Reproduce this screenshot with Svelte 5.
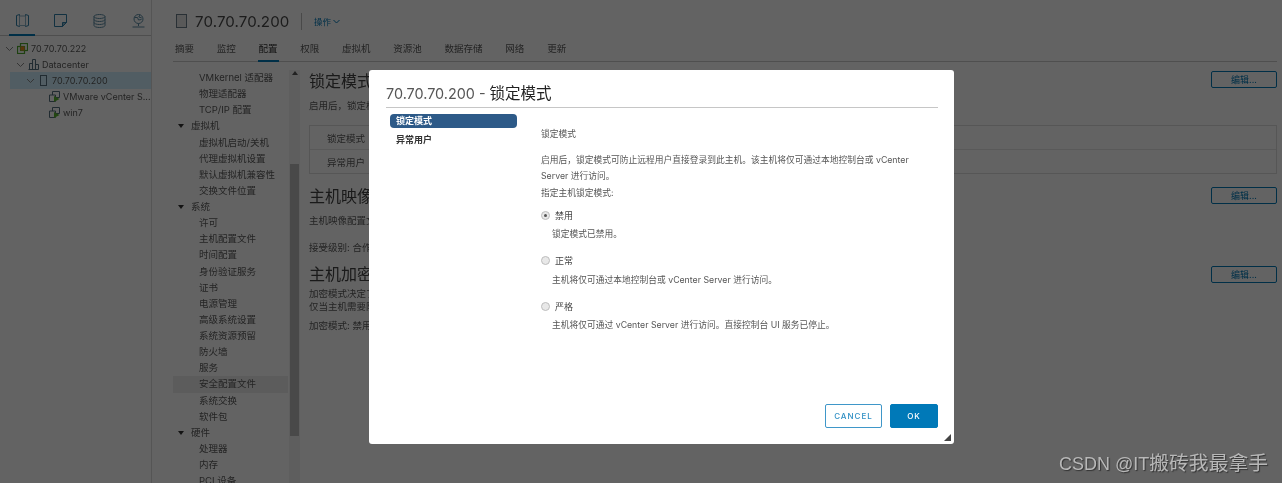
<script>
  const tabs = ['摘要', '监控', '配置', '权限', '虚拟机', '资源池', '数据存储', '网络', '更新'];
  const nav = [
    ['VMkernel 适配器'], ['物理适配器'], ['TCP/IP 配置'],
    ['虚拟机', 'group'], ['虚拟机启动/关机'], ['代理虚拟机设置'], ['默认虚拟机兼容性'], ['交换文件位置'],
    ['系统', 'group'], ['许可'], ['主机配置文件'], ['时间配置'], ['身份验证服务'], ['证书'], ['电源管理'],
    ['高级系统设置'], ['系统资源预留'], ['防火墙'], ['服务'], ['安全配置文件', 'active'], ['系统交换'], ['软件包'],
    ['硬件', 'group'], ['处理器'], ['内存'], ['PCI 设备']
  ];
  const modes = [
    { label: '禁用', desc: '锁定模式已禁用。', checked: true },
    { label: '正常', desc: '主机将仅可通过本地控制台或 vCenter Server 进行访问。', checked: false },
    { label: '严格', desc: '主机将仅可通过 vCenter Server 进行访问。直接控制台 UI 服务已停止。', checked: false }
  ];
</script>

<div class="page">
  <aside class="side">
    <div class="side-icons">
      <span class="si on">
        <svg width="13" height="13" viewBox="0 0 13 13" fill="none" stroke="#2f7fa8" stroke-width="1"><path d="M.5 1.500 3.500.5v12l-3-1zM12.500 1.500l-3-1v12l3-1z"/><rect x="3.500" y="2" width="6" height="9.500" stroke="#8fb4c8"/></svg>
      </span>
      <span class="si">
        <svg width="13" height="13" viewBox="0 0 13 13" fill="none" stroke="#2f7fa8" stroke-width="1"><path d="M.5.5h12v8l-4 4h-8z"/><path d="M8.500 12.500v-4h4z" fill="#8fb4c8"/></svg>
      </span>
      <span class="si">
        <svg width="13" height="14" viewBox="0 0 13 14" fill="none" stroke="#5a8aa3" stroke-width="1"><ellipse cx="6.500" cy="2.500" rx="5.500" ry="2"/><path d="M1 2.500v9c0 1.100 2.500 2 5.500 2s5.500-.9 5.500-2v-9M1 5.500c0 1.100 2.500 2 5.500 2s5.500-.9 5.500-2M1 8.500c0 1.100 2.500 2 5.500 2s5.500-.9 5.500-2"/></svg>
      </span>
      <span class="si">
        <svg width="13" height="14" viewBox="0 0 13 14" fill="none" stroke="#5a8aa3" stroke-width="1"><circle cx="6.500" cy="5" r="4.500"/><path d="M2.500 3.500h3l1 2.500 3-.5M8 .8 6.800 3l3 1M6.500 9.500V12M.5 13h12"/></svg>
      </span>
    </div>
    <div class="tree">
      <div class="node d0">
        <svg class="chev" width="9" height="9" viewBox="0 0 9 9"><path d="M1 3l3.500 3.500L8 3" fill="none" stroke="#8a8a8a" stroke-width="1"/></svg>
        <svg width="11" height="11" viewBox="0 0 11 11"><rect x="3.500" y=".5" width="7" height="7" fill="none" stroke="#4ea72e" stroke-width="1.200"/><rect x=".5" y="3.500" width="7" height="7" fill="none" stroke="#4ea72e" stroke-width="1.200"/><rect x="3.500" y="3.500" width="4" height="4" fill="#e8871e"/></svg>
        <span>70.70.70.222</span>
      </div>
      <div class="node d1">
        <svg class="chev" width="9" height="9" viewBox="0 0 9 9"><path d="M1 3l3.500 3.500L8 3" fill="none" stroke="#8a8a8a" stroke-width="1"/></svg>
        <svg width="11" height="11" viewBox="0 0 11 11" fill="none" stroke="#57707f"><path d="M.5 10.500h10M1.500 10.500v-6h3v6M4.500 10.500V.5h3v10M7.500 5.500h3v5"/></svg>
        <span>Datacenter</span>
      </div>
      <div class="node d2 sel">
        <svg class="chev" width="9" height="9" viewBox="0 0 9 9"><path d="M1 3l3.500 3.500L8 3" fill="none" stroke="#8a8a8a" stroke-width="1"/></svg>
        <svg width="11" height="11" viewBox="0 0 11 11" fill="none" stroke="#57707f"><rect x="2.500" y=".5" width="6" height="10"/></svg>
        <span>70.70.70.200</span>
      </div>
      <div class="node d3">
        <svg width="11" height="11" viewBox="0 0 11 11"><path d="M3.500 4V.5h7v6H7M.5 4h6v6.500h-6z" fill="none" stroke="#57707f"/><path d="M5 5l5.500 3L5 11z" fill="#5cb531"/></svg>
        <span>VMware vCenter S...</span>
      </div>
      <div class="node d3">
        <svg width="11" height="11" viewBox="0 0 11 11"><path d="M3.500 4V.5h7v6H7M.5 4h6v6.500h-6z" fill="none" stroke="#57707f"/><path d="M5 5l5.500 3L5 11z" fill="#5cb531"/></svg>
        <span>win7</span>
      </div>
    </div>
  </aside>

  <main class="main">
    <header class="head">
      <svg width="11" height="14" viewBox="0 0 11 14" fill="#e6e6e6" stroke="#6b7d88"><rect x=".5" y=".5" width="10" height="13"/></svg>
      <h1>70.70.70.200</h1>
      <span class="vline"></span>
      <span class="actions">操作
        <svg width="7" height="7" viewBox="0 0 7 7"><path d="M.5 2l3 3 3-3" fill="none" stroke="#0079b8"/></svg>
      </span>
    </header>
    <nav class="tabs">
      {#each tabs as t}
        <span class="tab" class:cur={t === '配置'}>{t}</span>
      {/each}
    </nav>
    <div class="body">
      <div class="cfg">
        {#each nav as [t, k]}
          <div class="cfg-row {k ?? ''}">
            {#if k === 'group'}<i class="caret"></i>{/if}{t}
          </div>
        {/each}
      </div>
      <div class="track">
        <i class="up"></i>
        <div class="thumb"></div>
        <i class="down"></i>
      </div>
      <div class="detail">
        <div class="sec-head first"><h2>锁定模式</h2><button class="edit">编辑...</button></div>
        <p class="p1">启用后，锁定模式</p>
        <div class="tbl">
          <div class="tr"><span>锁定模式</span></div>
          <div class="tr"><span>异常用户</span></div>
        </div>
        <div class="sec-head second"><h2>主机映像配置文件</h2><button class="edit">编辑...</button></div>
        <p class="p2">主机映像配置文件</p>
        <p class="p3">接受级别: 合作伙伴支持</p>
        <div class="sec-head third"><h2>主机加密模式</h2><button class="edit">编辑...</button></div>
        <p class="p4">加密模式决定了主机是否可以加密</p>
        <p class="p5">仅当主机需要防止未授权访问时</p>
        <p class="p6">加密模式: 禁用</p>
      </div>
    </div>
  </main>
</div>

<div class="scrim"></div>

<section class="modal">
  <h3>70.70.70.200 - <b>锁定模式</b></h3>
  <div class="modal-body">
    <div class="steps">
      <div class="step now">锁定模式</div>
      <div class="step">异常用户</div>
    </div>
    <div class="pane">
      <p class="pane-title">锁定模式</p>
      <p class="intro">启用后，锁定模式可防止远程用户直接登录到此主机。该主机将仅可通过本地控制台或 vCenter Server 进行访问。</p>
      <p class="intro-b">指定主机锁定模式:</p>
      {#each modes as m}
        <div class="mode">
          <div class="mode-top">
            <span class="radio" class:checked={m.checked}></span>
            <span>{m.label}</span>
          </div>
          <p class="mode-desc">{m.desc}</p>
        </div>
      {/each}
    </div>
  </div>
  <div class="foot">
    <button class="btn ghost">CANCEL</button>
    <button class="btn solid">OK</button>
  </div>
  <svg class="grip" width="7" height="7" viewBox="0 0 7 7"><path d="M7 0v7H0z" fill="#444"/></svg>
</section>

<div class="mark">CSDN @IT<span>搬砖我最拿手</span></div>

<style>
  :global(html), :global(body) {
    margin: 0;
    height: 483px;
    overflow: hidden;
    background: #fff;
  }
  :global(#app) {
    font-family: Inter, "Noto Sans CJK SC", sans-serif;
    font-size: 9.5px;
    color: #565656;
  }
  h1, h2, h3, p { margin: 0; font-weight: 400; }

  .page { display: flex; height: 483px; overflow: hidden; filter: blur(.55px); color: #5c5c5c; }

  .side { width: 151px; flex: none; border-right: 1px solid #dcdcdc; }
  .side-icons {
    display: grid;
    grid-template-columns: repeat(4, 39px);
    padding-left: 2px;
    height: 35px;
    border-bottom: 1px solid #c8c8c8;
  }
  .si { display: flex; align-items: center; justify-content: center; padding-top: 5px; margin-bottom: -1px; }
  .si.on { box-sizing: border-box; border-bottom: 2px solid #0079b8; margin: 0 6px -1px 7px; padding-top: 7px; }
  .tree { padding-top: 4px; }
  .node { display: flex; align-items: center; gap: 3px; height: 16.2px; white-space: nowrap; font-size: 9px; }
  .node svg { flex: none; }
  .d0 { padding-left: 5px; }
  .d1 { padding-left: 16px; }
  .d2 { padding-left: 26px; }
  .d3 { padding-left: 49px; }
  .sel { background: linear-gradient(90deg, #fff 10px, #d0f0ff 10px); }

  .main { flex: 1; min-width: 0; padding-left: 21px; padding-right: 5px; }
  .head { display: flex; align-items: center; height: 42px; padding: 0 0 0 3px; }
  .head h1 { font-size: 15.1px; margin-left: 8px; letter-spacing: .1px; color: #4a4a4a; }
  .vline { width: 1px; height: 17px; background: #bcbcbc; margin: 0 12px 0 11.5px; }
  .actions { color: #0079b8; font-size: 8.5px; display: flex; align-items: center; gap: 2px; }
  .tabs { display: flex; gap: 22.75px; height: 19px; border-bottom: 1px solid #ccc; padding-left: 2px; }
  .tab { padding: 0 1px; margin: 0 -1px; height: 18px; line-height: 13px; }
  .tab.cur { color: #333; border-bottom: 2px solid #0079b8; }

  .body { display: flex; padding-top: 8px; }
  .cfg { width: 115px; flex: none; }
  .cfg-row { height: 16.13px; line-height: 16px; padding-left: 26px; white-space: nowrap; position: relative; }
  .cfg-row.group { padding-left: 18px; }
  .cfg-row.active { background: #ececec; }
  .caret {
    position: absolute; left: 5px; top: 6px;
    border: 3px solid transparent; border-top: 4px solid #333; border-bottom: 0;
  }
  .track { width: 11px; flex: none; margin-right: 9px; position: relative; background: #f2f2f2; height: 420px; margin-left: 1px;}
  .thumb { position: absolute; left: 1px; right: 1px; top: 94px; height: 272px; background: #bcbcbc; }
  .up, .down { position: absolute; left: 3px; border: 3px solid transparent; }
  .up { top: 1px; border-bottom: 4px solid #555; border-top: 0; }
  .down { bottom: 0; border-top: 4px solid #555; border-bottom: 0; }

  .detail { flex: 1; min-width: 0; }
  .sec-head { display: flex; align-items: center; justify-content: space-between; }
  .sec-head h2 { font-size: 16px; line-height: 20px; color: #444; }
  .first { margin-top: 1px; }
  .second { margin-top: 12px; }
  .third { margin-top: 9px; }
  .edit {
    width: 66px; height: 17px; padding: 0; font: inherit; font-size: 9px;
    color: #0079b8; background: transparent; border: 1px solid #0079b8; border-radius: 2px;
  }
  .first .edit { margin-top: -3px; }
  .second .edit { margin-bottom: 2px; }
  .p1 { margin-top: 8px; line-height: 14px; }
  .tbl { margin-top: 12px; border: 1px solid #ddd; }
  .tr { height: 23px; display: flex; align-items: center; padding-left: 17px; border-bottom: 1px solid #e4e4e4; }
  .tr:last-child { border-bottom: 0; }
  .p2 { margin-top: 8px; line-height: 14px; }
  .p3 { margin-top: 13px; line-height: 14px; }
  .p4 { margin-top: 3px; line-height: 13px; }
  .p5 { line-height: 13px; }
  .p6 { margin-top: 6px; line-height: 14px; }

  .scrim { position: fixed; inset: 0; background: rgba(0, 0, 0, .61); }

  .modal {
    position: fixed; left: 369px; top: 70px; width: 585px; height: 374px;
    box-sizing: border-box; padding: 0 16px 0 17px;
    background: #fff; border-radius: 3px;
    display: flex; flex-direction: column;
    filter: blur(.3px);
  }
  .modal h3 {
    font-size: 14.4px; height: 37px; line-height: 48px; border-bottom: 1px solid #c6c6c6;
    color: #565656;
  }
  .modal h3 b { font-weight: 400; color: #222; font-size: 15.5px; }
  .modal-body { flex: 1; display: flex; min-height: 0; }
  .steps { width: 127px; margin: 6px 0 0 4px; flex: none; font-size: 9px; font-weight: 700; }
  .step { height: 14px; line-height: 14px; padding-left: 6px; border-radius: 4px; color: #333; margin-bottom: 5px; }
  .step.now { background: #2d5a88; color: #fff; }
  .pane { margin-left: 24px; padding-top: 19px; flex: 1; font-size: 8.75px; }
  .pane-title { line-height: 14px; }
  .intro { margin-top: 12px; line-height: 15.5px; width: 385px; }
  .intro-b { line-height: 16px; margin: 1px 0 7px; }
  .mode { height: 45.7px; }
  .mode-top { display: flex; align-items: center; height: 14px; gap: 5px; color: #444; font-size: 9px; }
  .radio {
    width: 9px; height: 9px; border-radius: 50%;
    border: 1px solid #bdbdbd; background: #e8e8e8;
    box-sizing: border-box; position: relative; flex: none;
  }
  .radio.checked::after {
    content: ""; position: absolute; left: 2px; top: 2px; width: 3px; height: 3px;
    border-radius: 50%; background: #555;
  }
  .mode-desc { margin: 5px 0 0 11px; line-height: 14px; white-space: nowrap; }
  .foot { display: flex; justify-content: flex-end; gap: 8px; padding-bottom: 16px; }
  .btn {
    height: 24px; padding: 0; border-radius: 2px; font-family: Inter, sans-serif; font-size: 8px;
    font-weight: 500; letter-spacing: 1px;
  }
  .ghost { width: 57px; background: #fff; color: #2f8fc4; border: 1px solid #3f97c9; }
  .solid { width: 48px; background: #0079b8; color: #fff; border: 1px solid #0079b8; }
  .grip { position: absolute; right: 3px; bottom: 3px; }

  .mark {
    position: fixed; left: 1059px; top: 451px;
    font-family: "Liberation Sans", "Noto Sans CJK SC", sans-serif;
    font-size: 18px; line-height: 24px; color: #b8b8b8; white-space: nowrap;
    text-shadow: 1px 1px 1px #333;
  }
  .mark span { font-size: 19.8px; }
</style>
